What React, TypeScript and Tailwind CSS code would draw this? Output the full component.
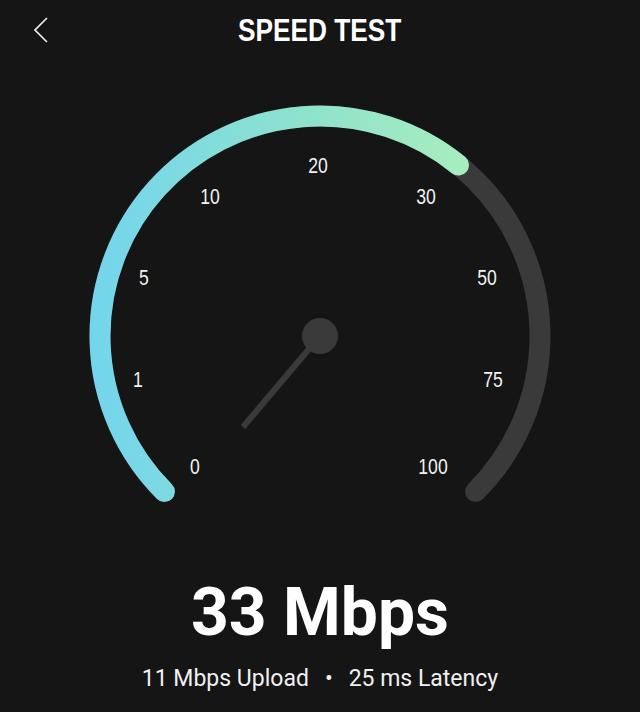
import React from "react";

const CX = 320;
const CY = 336;
const R = 220;

function pt(thetaFromTopDeg: number) {
  const t = (thetaFromTopDeg * Math.PI) / 180;
  return [CX + R * Math.sin(t), CY - R * Math.cos(t)];
}

const labels: { t: string; x: number; y: number }[] = [
  { t: "0", x: 195, y: 466 },
  { t: "1", x: 138, y: 379 },
  { t: "5", x: 144, y: 277 },
  { t: "10", x: 210, y: 196 },
  { t: "20", x: 318, y: 165 },
  { t: "30", x: 426, y: 196 },
  { t: "50", x: 487, y: 277 },
  { t: "75", x: 493, y: 379 },
  { t: "100", x: 433, y: 466 },
];

function Gauge() {
  const [sx, sy] = pt(-135);
  const [ex, ey] = pt(135);
  const [px, py] = pt(39);
  const track = `M ${sx} ${sy} A ${R} ${R} 0 1 1 ${ex} ${ey}`;
  const prog = `M ${sx} ${sy} A ${R} ${R} 0 0 1 ${px} ${py}`;
  return (
    <svg width="640" height="480" viewBox="0 60 640 480" className="block">
      <defs>
        <linearGradient id="g" gradientUnits="userSpaceOnUse" x1="90" y1="300" x2="470" y2="300">
          <stop offset="0" stopColor="#73d5ed" />
          <stop offset="0.6" stopColor="#90e3cc" />
          <stop offset="1" stopColor="#a8edbd" />
        </linearGradient>
      </defs>
      <path d={track} fill="none" stroke="#3a3a3a" strokeWidth="21" strokeLinecap="round" />
      <path d={prog} fill="none" stroke="url(#g)" strokeWidth="21" strokeLinecap="round" />
      {labels.map((l) => (
        <text
          key={l.t}
          x={0}
          y={0}
          transform={`translate(${l.x} ${l.y}) scale(0.8 1)`}
          textAnchor="middle"
          dominantBaseline="central"
          fill="#f2f2f2"
          fontSize="22"
          style={{ fontFamily: '"Liberation Sans", Arial, sans-serif' }}
        >
          {l.t}
        </text>
      ))}
      <line x1={CX} y1={CY} x2={243} y2={427} stroke="#3a3a3a" strokeWidth="6" />
      <circle cx={CX} cy={CY} r="18" fill="#3a3a3a" />
    </svg>
  );
}

export default function App() {
  return (
    <div className="w-[640px] h-[712px] bg-[#151515] text-white flex flex-col overflow-hidden">
      <div className="h-[60px] grid grid-cols-[80px_1fr_80px] items-start pt-[14px]">
        <div className="pl-[34px] pt-[3px]">
          <svg width="16" height="26" viewBox="0 0 16 26">
            <path d="M13 1 L1 13 L13 25" fill="none" stroke="#eeeeee" strokeWidth="1.6" />
          </svg>
        </div>
        <div className="flex justify-center">
          <span className="inline-block scale-x-[0.82] text-[32px] leading-none font-bold whitespace-nowrap font-['Liberation_Sans',Arial,sans-serif]">
            SPEED TEST
          </span>
        </div>
        <div />
      </div>
      <Gauge />
      <div className="mt-[40px] text-center text-[66px] leading-none font-bold font-['Roboto',sans-serif]">
        33 Mbps
      </div>
      <div className="mt-[21px] flex justify-center items-center gap-[16px] text-[23px] leading-none font-['Roboto',sans-serif] text-[#f0f0f0]">
        <span>11 Mbps Upload</span>
        <span>•</span>
        <span>25 ms Latency</span>
      </div>
    </div>
  );
}
